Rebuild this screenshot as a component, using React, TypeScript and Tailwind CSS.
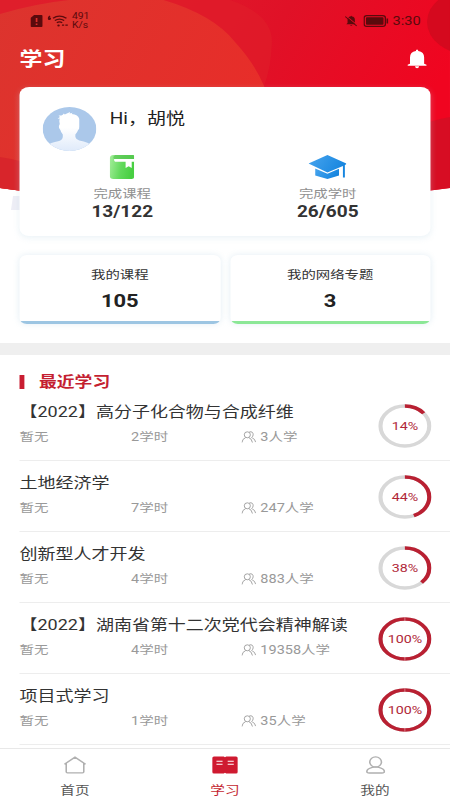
type Course = {
  title: string;
  hours: string;
  learners: string;
  percent: number;
};

const courses: Course[] = [
  { title: "【2022】高分子化合物与合成纤维", hours: "2学时", learners: "3人学", percent: 14 },
  { title: "土地经济学", hours: "7学时", learners: "247人学", percent: 44 },
  { title: "创新型人才开发", hours: "4学时", learners: "883人学", percent: 38 },
  { title: "【2022】湖南省第十二次党代会精神解读", hours: "4学时", learners: "19358人学", percent: 100 },
  { title: "项目式学习", hours: "1学时", learners: "35人学", percent: 100 },
];

export default function App() {
  return (
    <div className="h-[800px] w-[450px] overflow-hidden bg-white">
      {/* 369px wide layout shown on a 450px wide screen */}
      <main className="relative flex h-[800px] w-[369px] origin-top-left scale-x-[1.2195] flex-col bg-white font-[Roboto,'Noto_Sans_CJK_SC',sans-serif] text-[#333]">
        <HeaderBackground />
        <StatusBar />
        <header className="relative flex h-[46px] items-center justify-between pr-[19px] pl-4">
          <h1 className="mt-0.5 text-[18.8px] leading-6 font-bold text-white">学习</h1>
          <BellIcon />
        </header>

        <section className="relative mx-4 mt-[5px] h-[149px] shrink-0 rounded-lg bg-white shadow-[0_2px_6px_rgba(190,215,230,0.3)]">
          <div className="flex h-[68px] pt-5 pl-[19px]">
            <Avatar />
            <p className="ml-[11px] text-[15.6px] leading-[25px] text-[#222]">Hi，胡悦</p>
          </div>
          <div className="grid grid-cols-2">
            <Stat icon={<BookIcon />} label="完成课程" value="13/122" />
            <Stat icon={<CapIcon />} label="完成学时" value="26/605" />
          </div>
        </section>

        <section className="mx-4 mt-[19px] grid shrink-0 grid-cols-2 gap-2">
          <Shortcut label="我的课程" value="105" barClass="bg-[#9cc5e2]" />
          <Shortcut label="我的网络专题" value="3" barClass="bg-[#8be796]" />
        </section>

        <div className="mt-[19px] h-3 shrink-0 bg-[#efefef]" />

        <section className="h-[393px] shrink-0 overflow-hidden pl-4">
          <h2 className="flex h-[35px] items-center pt-[18px] text-[14.6px] leading-[18px] font-bold text-[#c41f31]">
            <span className="mr-3 h-3.5 w-1 bg-[#c91d31]" />
            最近学习
          </h2>
          {courses.map((course) => (
            <CourseRow key={course.title} course={course} />
          ))}
        </section>

        <nav className="grid h-[52px] shrink-0 grid-cols-3 border-t border-[#e8e8e8] bg-white text-xs text-[#555]">
          <div className="flex flex-col items-center pt-[7px]">
            <HomeIcon />
            <span className="mt-[9px] leading-4">首页</span>
          </div>
          <div className="flex flex-col items-center pt-[7px] text-[#c41f31]">
            <StudyIcon />
            <span className="mt-[9px] leading-4">学习</span>
          </div>
          <div className="flex flex-col items-center pt-[7px]">
            <UserIcon />
            <span className="mt-[9px] leading-4">我的</span>
          </div>
        </nav>
      </main>
    </div>
  );
}

function CourseRow({ course }: { course: Course }) {
  return (
    <div className="flex h-[71px] items-start justify-between border-b border-[#ededed] pr-[15px]">
      <div className="pt-[11px]">
        <h3 className="text-[14.75px] leading-[22px] whitespace-nowrap text-[#333]">{course.title}</h3>
        <div className="mt-[5px] flex h-[18px] items-center text-[11.9px] leading-[17px] text-[#999]">
          <span className="w-[91.5px]">暂无</span>
          <span className="w-[90.5px]">{course.hours}</span>
          <PeopleIcon />
          <span className="ml-[3.5px]">{course.learners}</span>
        </div>
      </div>
      <ProgressRing percent={course.percent} />
    </div>
  );
}

function ProgressRing({ percent }: { percent: number }) {
  return (
    <div className="mt-[14px] grid h-11 w-11 place-items-center">
      <svg className="col-start-1 row-start-1 h-11 w-11 -rotate-90" viewBox="0 0 44 44" fill="none">
        <circle cx="22" cy="22" r="20" stroke="#d8d8d8" strokeWidth="3.4" />
        <circle
          cx="22"
          cy="22"
          r="20"
          stroke="#b92032"
          strokeWidth="3.4"
          pathLength="100"
          strokeDasharray={`${percent} 100`}
        />
        {percent === 100 ? <path d="M0 22h4M40 22h4" stroke="#e9a5ad" strokeWidth="0.6" /> : null}
      </svg>
      <span className="col-start-1 row-start-1 text-[11.7px] leading-4 text-[#b02638]">{percent}%</span>
    </div>
  );
}

function Stat({ icon, label, value }: { icon: React.ReactNode; label: string; value: string }) {
  return (
    <div className="flex flex-col items-center">
      {icon}
      <span className="mt-[7px] text-[11.8px] leading-[17px] text-[#909090]">{label}</span>
      <span className="text-[15.6px] leading-[19px] font-bold text-[#333]">{value}</span>
    </div>
  );
}

function Shortcut({ label, value, barClass }: { label: string; value: string; barClass: string }) {
  return (
    <div className="flex h-[69px] flex-col items-center overflow-hidden rounded-md bg-white pt-[11px] shadow-[0_0_6px_rgba(190,215,230,0.4)]">
      <span className="text-[11.8px] leading-[18px] text-[#333]">{label}</span>
      <span className="mt-[6px] text-[18px] leading-[22px] font-bold text-[#222]">{value}</span>
      <span className={`mt-auto h-[3px] w-full shrink-0 ${barClass}`} />
    </div>
  );
}

function StatusBar() {
  return (
    <div className="relative flex h-9 shrink-0 items-end justify-between pr-6 pb-1 pl-[25px] text-[#5b0a0d]">
      <div className="flex h-[22px] items-center">
        <svg className="h-3 w-2.5" viewBox="0 0 10 12">
          <path d="M3 0h6q1 0 1 1v10q0 1-1 1H1q-1 0-1-1V3z" fill="currentColor" />
          <path d="M5 3v4M5 8.5V10" stroke="#dc2e2b" strokeWidth="1.4" />
        </svg>
        <svg className="ml-1 h-3 w-[17px]" viewBox="0 0 17 12" fill="none" stroke="currentColor">
          <path d="M4.500 3.200Q9.500-.8 15.500 3.200M6 5.500q3.800-2.800 7.600 0M7.600 7.700q2.200-1.500 4.400 0" strokeWidth="1.3" />
          <path d="M2 1Q.6 2 .7 3.600q.3 1.200 1.300.6.8-1-.8-1.300M11.800 10.200h1.800M14.600 10.200h2" strokeWidth="1.3" />
          <circle cx="9" cy="10.5" r="1" fill="currentColor" stroke="none" />
        </svg>
        <span className="ml-[3px] flex flex-col text-[8.5px] leading-[9px]">
          <span>491</span>
          <span>K/s</span>
        </span>
      </div>
      <div className="flex h-[22px] items-center">
        <svg className="h-3 w-2.5" viewBox="0 0 10 12">
          <path d="M1 9.200 2 8V5q0-3 2.400-3.400Q5-.1 5.600 1.600 8 2 8 5v3l1 1.200zM4 10h2q-1 1.500-2 0z" fill="currentColor" />
          <path d="M.8 1 9.900 10" stroke="#dc1125" strokeWidth="0.9" />
          <path d="M0 1.500 9.500 11" stroke="currentColor" strokeWidth="0.9" />
        </svg>
        <svg className="ml-[5px] h-3 w-[21px]" viewBox="0 0 21 12">
          <rect x="0.6" y="0.6" width="17.4" height="10.8" rx="2.2" fill="none" stroke="currentColor" strokeWidth="1.1" />
          <rect x="2.1" y="2.200" width="14.4" height="7.600" rx="0.8" fill="currentColor" />
          <path d="M19.600 3.600v4.800" stroke="currentColor" strokeWidth="1.3" />
        </svg>
        <span className="ml-[3px] text-[12px] leading-4">3:30</span>
      </div>
    </div>
  );
}

function HeaderBackground() {
  return (
    <svg className="absolute top-0 left-0 h-[215px] w-[369px]" viewBox="0 0 450 215" preserveAspectRatio="none">
      <defs>
        <linearGradient id="base" x1="0" x2="1" y1="0" y2="0.3">
          <stop offset="0" stopColor="#de2430" />
          <stop offset="0.6" stopColor="#e01127" />
          <stop offset="1" stopColor="#f00520" />
        </linearGradient>
        <linearGradient id="disc" x1="0" x2="1" y1="0" y2="0.4">
          <stop offset="0" stopColor="#dc342e" />
          <stop offset="1" stopColor="#e82d29" />
        </linearGradient>
        <clipPath id="hero">
          <path d="M0 0H450V188Q225 220 0 188Z" />
        </clipPath>
      </defs>
      <path d="M13 196h20v14H11z" fill="#eeeef6" />
      <g clipPath="url(#hero)">
        <rect width="450" height="215" fill="url(#base)" />
        <path d="M0 0H230Q272 14 272 42Q271 68 264 86V215H0Z" fill="#df1c2a" opacity="0.7" />
        <path d="M0 14Q40 2 80-1H160Q213 14 235 42Q255 64 264 86Q280 130 280 215H0Z" fill="url(#disc)" />
        <path d="M0 157Q60 165 100 215H0Z" fill="#d8252b" />
        <ellipse cx="471" cy="22" rx="44" ry="33" fill="#d5091e" />
        <path d="M400 133Q430 120 450 117V200H400Z" fill="#d70d23" />
      </g>
    </svg>
  );
}

function BellIcon() {
  return (
    <svg className="h-5 w-4" viewBox="0 0 16 20" fill="white">
      <path d="M7 2q0-1.500 1-1.500T9 2q4.800.8 4.800 6.500v6.300l2 .9v1H.2v-1l2-.9V8.500Q2.200 2.800 7 2zM6.300 17.300h3.400q-.2 2-1.700 2t-1.700-2z" />
    </svg>
  );
}

function Avatar() {
  return (
    <svg className="h-11 w-11" viewBox="0 0 44 44">
      <defs>
        <linearGradient id="person" x1="0" x2="0" y1="0" y2="1">
          <stop offset="0.4" stopColor="#fff" />
          <stop offset="1" stopColor="#dfeafa" />
        </linearGradient>
        <clipPath id="round">
          <circle cx="22" cy="22" r="22" />
        </clipPath>
      </defs>
      <g clipPath="url(#round)">
        <rect width="44" height="44" fill="#abc8ea" />
        <path
          d="M14 17q-.8-3 0-5.500l-1.800.2 2-1.700-1.200-1.500q2 .4 3.500-.8l.8-1.200.8.900 4.400-2.400-.4 1.600 2.400-.8-.8 1.300q5.500.4 6.300 4.900v7.500q.2 2.500-1 3.500-.6 2.500-2.200 4.500v2.500q.5 2.500 3.200 3.500 8 1.500 10.500 5.500V44H3v-5q3-3.500 10.500-5 3-1.500 3-4.500v-2q-1.500-2-2-4.500-1.500-1.500-1.200-4z"
          fill="url(#person)"
        />
      </g>
    </svg>
  );
}

function BookIcon() {
  return (
    <svg className="h-6 w-5" viewBox="0 0 20 24">
      <defs>
        <linearGradient id="green" x1="0" x2="1" y1="0" y2="0.2">
          <stop offset="0" stopColor="#a5ee9b" />
          <stop offset="0.55" stopColor="#62d95c" />
          <stop offset="1" stopColor="#48cf42" />
        </linearGradient>
      </defs>
      <path d="M3 0h16q1 0 1 1v21q0 2-2 2H3q-3 0-3-3V3.500Q0 0 3 0z" fill="url(#green)" />
      <path d="M4.500 0H19q1 0 1 1v3H3.500Q2 2 4.500 0z" fill="#59c653" opacity="0.7" />
      <path d="M3.500 4H20v2.800h-2V13l-2.500-1.700L13 13V6.800H4.500q-1 0-1-2.800z" fill="white" />
    </svg>
  );
}

function CapIcon() {
  return (
    <svg className="h-6 w-[31px]" viewBox="0 0 31 24">
      <defs>
        <linearGradient id="blue" x1="0" x2="1" y1="0" y2="0.4">
          <stop offset="0" stopColor="#48a5ee" />
          <stop offset="1" stopColor="#1685df" />
        </linearGradient>
      </defs>
      <path d="M15.500 0 31 8.500v.8l-1.200.7v12.500h-1.600V11L15.500 17.500 0 8.500z" fill="url(#blue)" />
      <path d="M5.500 13.500l10 5.300 9.500-5v6.700L15.500 24l-10-3.500z" fill="url(#blue)" />
    </svg>
  );
}

function PeopleIcon() {
  return (
    <svg className="h-3 w-3" viewBox="0 0 12 12" fill="none" stroke="#999" strokeWidth="0.8">
      <ellipse cx="4.800" cy="3.800" rx="2.500" ry="3" />
      <path d="M.4 11.500q.3-3.700 3-4.900M6 6.600q2.300.8 3 4.900M6.500.9Q9.600.2 9.600 3.700q0 2-1.500 3M8.800 6.900q2.400 1 2.800 4.200" />
    </svg>
  );
}

function HomeIcon() {
  return (
    <svg className="h-[18px] w-[19px]" viewBox="0 0 19 18" fill="none" stroke="#b0b0b0" strokeWidth="1.300">
      <path d="M.8 8.300 9.500 1.200l8.700 7.100M2.300 7.400v8.400q0 1 1 1h12.400q1 0 1-1V7.400" />
    </svg>
  );
}

function StudyIcon() {
  return (
    <svg className="h-[18px] w-[21px]" viewBox="0 0 21 18">
      <path d="M1.500.5H9.500l1 .8 1-.8h8q1.500 0 1.500 1.500v14q0 1.500-1.500 1.500h-8l-1-.8-1 .8h-8Q0 17.500 0 16V2Q0 .5 1.500.5z" fill="#cf1a30" />
      <path d="M3.500 5.200h5M3.500 8.200h5M12.700 5.200h5M12.700 8.200h5" stroke="white" strokeWidth="1.100" />
    </svg>
  );
}

function UserIcon() {
  return (
    <svg className="h-[18px] w-4" viewBox="0 0 16 18" fill="none" stroke="#b0b0b0" strokeWidth="1.300">
      <ellipse cx="8" cy="6" rx="4.800" ry="5.200" />
      <path d="M5.300 11.300Q.8 12.800.8 15.500q0 1.500 2 1.500h10.400q2 0 2-1.500 0-2.700-4.500-4.200-2.700-1-5.400 0z" />
    </svg>
  );
}
